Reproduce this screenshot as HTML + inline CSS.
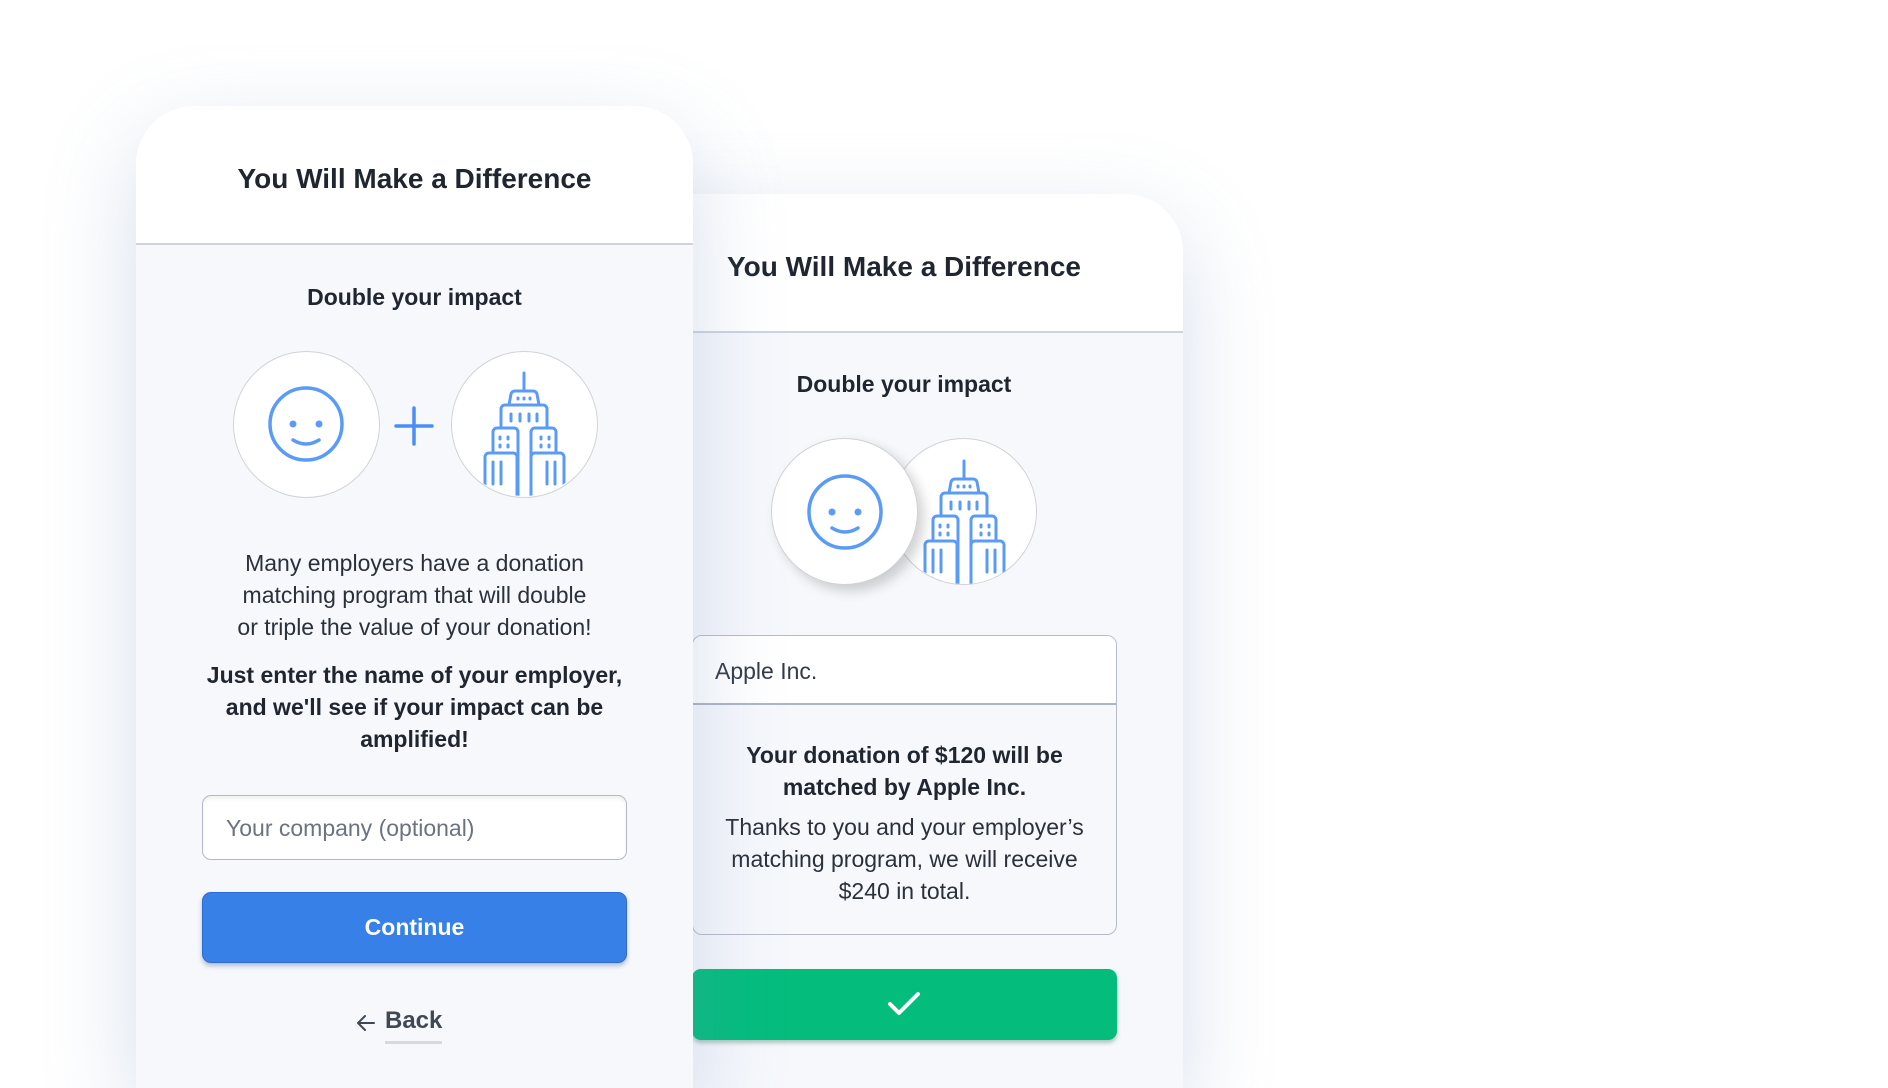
<!DOCTYPE html>
<html style="width:1888px;height:1088px;overflow:hidden"><head><meta charset="utf-8"><style>
*{margin:0;padding:0;box-sizing:border-box}
body{width:1888px;height:1088px;background:#fff;overflow:hidden;position:relative;font-family:"Liberation Sans",sans-serif;color:#1f2630}
.card{position:absolute;background:#f6f8fc;border-radius:58px 58px 0 0;overflow:hidden;box-shadow:0 30px 90px rgba(110,140,190,0.28)}
.hd{background:#fff;border-bottom:2px solid #cfd4dc;text-align:center;font-weight:bold;font-size:28px}
.abs{position:absolute;text-align:center}
.circ{position:absolute;width:147px;height:147px;border-radius:50%;background:#fff;border:1.5px solid #d0d3d8}
</style></head><body>
<svg width="0" height="0" style="position:absolute">
<defs>
<clipPath id="cc"><circle cx="0" cy="0" r="72"/></clipPath>
<g id="bld" fill="#fff" stroke="#5b9bf8" stroke-width="3" stroke-linecap="round" stroke-linejoin="round">
 <g clip-path="url(#cc)">
 <line x1="0" y1="-51" x2="0" y2="-33"/>
 <path d="M-15,-19 L-13,-30 Q-12,-33 -9,-33 L9,-33 Q12,-33 13,-30 L15,-19"/>
 <rect x="-23" y="-19" width="46" height="110" rx="4"/>
 <rect x="-31" y="4" width="25" height="110" rx="4"/>
 <rect x="7" y="4" width="25" height="110" rx="4"/>
 <rect x="-39" y="29" width="32" height="90" rx="4"/>
 <rect x="7" y="29" width="33" height="90" rx="4"/>
 <line x1="-13" y1="-10" x2="-13" y2="-3"/><line x1="-4" y1="-10" x2="-4" y2="-3"/><line x1="5" y1="-10" x2="5" y2="-3"/><line x1="13" y1="-10" x2="13" y2="-3"/>
 <line x1="-6" y1="-26" x2="-6" y2="-25"/><line x1="0" y1="-26" x2="0" y2="-25"/><line x1="6" y1="-26" x2="6" y2="-25"/>
 <line x1="-24" y1="13" x2="-24" y2="15"/><line x1="-16" y1="13" x2="-16" y2="15"/><line x1="-24" y1="21" x2="-24" y2="23"/><line x1="-16" y1="21" x2="-16" y2="23"/>
 <line x1="17" y1="13" x2="17" y2="15"/><line x1="25" y1="13" x2="25" y2="15"/><line x1="17" y1="21" x2="17" y2="23"/><line x1="25" y1="21" x2="25" y2="23"/>
 <line x1="-31" y1="38" x2="-31" y2="60"/><line x1="-23" y1="38" x2="-23" y2="60"/>
 <line x1="23" y1="38" x2="23" y2="60"/><line x1="31" y1="38" x2="31" y2="60"/>
 </g>
</g>
<g id="smile" fill="none" stroke="#5b9bf8" stroke-width="3.5" stroke-linecap="round">
 <circle cx="0" cy="0" r="36"/>
 <circle cx="-13" cy="0" r="3.5" fill="#5b9bf8" stroke="none"/>
 <circle cx="13" cy="0" r="3.5" fill="#5b9bf8" stroke="none"/>
 <path d="M-13,16 Q0,24 13,16"/>
</g>
</defs>
</svg>

<!-- card 2 (behind) -->
<div class="card" style="left:625px;top:194px;width:558px;height:894px">
 <div class="hd" style="height:139px;padding-top:57px">You Will Make a Difference</div>
 <div class="abs" style="left:0;width:558px;top:177px;font-weight:bold;font-size:23px">Double your impact</div>
 <div class="circ" style="left:265px;top:244px"></div>
 <svg class="abs" style="left:339px;top:318px;overflow:visible" width="1" height="1"><use href="#bld"/></svg>
 <div class="circ" style="left:146px;top:244px;box-shadow:6px 6px 12px rgba(0,0,0,0.18)"></div>
 <svg class="abs" style="left:220px;top:318px;overflow:visible" width="1" height="1"><use href="#smile"/></svg>
 <div style="position:absolute;left:67px;top:441px;width:425px;height:300px;border:1.5px solid #b6bcc7;border-radius:10px;overflow:hidden">
  <div style="background:#fff;height:69px;border-bottom:2px solid #aeb5c2;font-size:23px;padding:22px 0 0 22px;color:#333b46">Apple Inc.</div>
  <div style="text-align:center;font-size:23px;font-weight:bold;line-height:32px;margin-top:34px">Your donation of $120 will be<br>matched by Apple Inc.</div>
  <div style="text-align:center;font-size:23px;line-height:32px;margin-top:8px;color:#2a313b">Thanks to you and your employer’s<br>matching program, we will receive<br>$240 in total.</div>
 </div>
 <div style="position:absolute;left:67px;top:775px;width:425px;height:71px;background:#04bd7d;border-radius:9px;box-shadow:0 3px 4px rgba(0,80,50,0.3)">
  <svg style="position:absolute;left:195px;top:22px" width="34" height="26"><path d="M3,13 L12,22 L31,3" fill="none" stroke="#fff" stroke-width="4" stroke-linecap="round" stroke-linejoin="round"/></svg>
 </div>
</div>

<!-- card 1 (front) -->
<div class="card" style="left:136px;top:106px;width:557px;height:982px">
 <div class="hd" style="height:139px;padding-top:57px">You Will Make a Difference</div>
 <div class="abs" style="left:0;width:557px;top:178px;font-weight:bold;font-size:23px">Double your impact</div>
 <div class="circ" style="left:97px;top:245px"></div>
 <svg class="abs" style="left:170px;top:318px;overflow:visible" width="1" height="1"><use href="#smile"/></svg>
 <svg class="abs" style="left:278px;top:320px;overflow:visible" width="1" height="1"><path d="M-18,0 H18 M0,-18 V18" stroke="#4a8df5" stroke-width="3.5" stroke-linecap="round"/></svg>
 <div class="circ" style="left:315px;top:245px"></div>
 <svg class="abs" style="left:388px;top:318px;overflow:visible" width="1" height="1"><use href="#bld"/></svg>
 <div class="abs" style="left:0;width:557px;top:441px;font-size:23px;line-height:32px;color:#2a313b">Many employers have a donation<br>matching program that will double<br>or triple the value of your donation!</div>
 <div class="abs" style="left:0;width:557px;top:553px;font-size:23px;line-height:32px;font-weight:bold">Just enter the name of your employer,<br>and we'll see if your impact can be<br>amplified!</div>
 <div style="position:absolute;left:66px;top:689px;width:425px;height:65px;background:#fff;border:1.5px solid #b3b9c4;border-radius:9px;box-shadow:inset 0 3px 3px rgba(0,0,0,0.06);font-size:23px;color:#6b7380;padding:19px 0 0 23px">Your company (optional)</div>
 <div style="position:absolute;left:66px;top:786px;width:425px;height:71px;background:#3780e8;border:1.5px solid #2c6ccf;border-radius:9px;box-shadow:0 3px 5px rgba(20,50,120,0.3);color:#fff;font-size:23px;font-weight:bold;text-align:center;line-height:68px">Continue</div>
 <div class="abs" style="left:220px;top:901px;width:120px;font-size:24px;font-weight:bold;color:#404854;text-align:left">
  <svg style="position:absolute;left:0;top:7px" width="20" height="18"><path d="M18,9 H3 M9,2 L2,9 L9,16" fill="none" stroke="#404854" stroke-width="2" stroke-linecap="round" stroke-linejoin="round"/></svg>
  <span style="position:absolute;left:29px;top:0;border-bottom:3px solid #d6d9de;padding-bottom:6px">Back</span>
 </div>
</div>
</body></html>
